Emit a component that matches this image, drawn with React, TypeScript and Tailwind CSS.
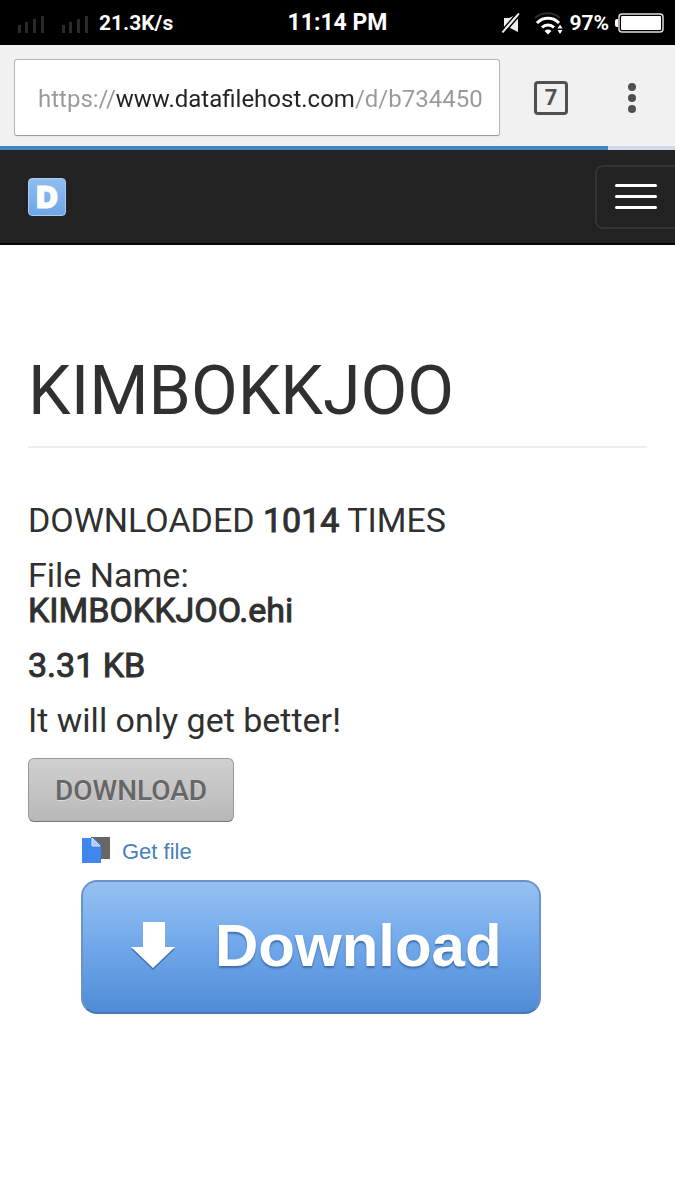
import { useState } from "react";

type FileInfo = {
  title: string;
  fileName: string;
  size: string;
  downloads: number;
  description: string;
};

const file: FileInfo = {
  title: "KIMBOKKJOO",
  fileName: "KIMBOKKJOO.ehi",
  size: "3.31 KB",
  downloads: 1014,
  description: "It will only get better!",
};

const SignalIcon = () => (
  <svg width="28" height="20" viewBox="0 0 28 20" fill="#2a2a2a" aria-hidden="true">
    <rect x="1" y="12" width="3" height="8" />
    <rect x="8" y="9" width="3" height="11" />
    <rect x="16" y="6" width="3" height="14" />
    <rect x="24" y="3" width="3" height="17" />
  </svg>
);

const MutedIcon = () => (
  <svg width="20" height="20" viewBox="0 0 20 20" aria-hidden="true">
    <path d="M3 5h5l9-4v18l-8-4H3z" fill="#eee" />
    <path d="M0 18.500 16.500-.5" stroke="#000" strokeWidth="1.500" />
    <path d="M1.500 19.500 18 .5" stroke="#eee" strokeWidth="2" />
    <path d="M3 20.500 19.500 1.500" stroke="#000" strokeWidth="1.500" />
  </svg>
);

const WifiIcon = () => (
  <svg width="32" height="24" viewBox="0 0 32 24" fill="none" aria-hidden="true">
    <path d="M2 7a19 19 0 0 1 25 0" stroke="#2c2c2c" strokeWidth="2" />
    <path d="M4 12a15 15 0 0 1 22 0" stroke="#fff" strokeWidth="3" />
    <path d="M9 16.500a8.500 8.500 0 0 1 12 0" stroke="#fff" strokeWidth="3" />
    <path d="M11.500 20a5 5 0 0 1 7 0L15 23.500z" fill="#fff" />
    <path d="M27 13.500l2.500 4h-5zM27 23l2.500-4h-5z" fill="#fff" />
  </svg>
);

const BatteryIcon = () => (
  <svg width="49" height="20" viewBox="0 0 49 20" aria-hidden="true">
    <path d="M3 6H2a2 2 0 0 0-2 2v4a2 2 0 0 0 2 2h1z" fill="#fff" />
    <rect x="4" y="1" width="44" height="18" rx="3" fill="none" stroke="#ddd" strokeWidth="1.500" />
    <rect x="6" y="3" width="40" height="14" rx="1" fill="#fff" />
  </svg>
);

const StatusBar = () => (
  <header className="grid grid-cols-[1fr_auto_1fr] items-center h-[45px] bg-black px-[11px] text-white font-bold text-[21px]">
    <div className="flex items-center gap-4 pl-1.5">
      <SignalIcon />
      <SignalIcon />
      <span className="-ml-1.5 mt-0.5">21.3K/s</span>
    </div>
    <span className="mt-0.5 text-[23px]">11:14 PM</span>
    <div className="flex items-center justify-end">
      <MutedIcon />
      <div className="ml-3 mr-1">
        <WifiIcon />
      </div>
      <span className="mt-0.5 mr-1.5">97%</span>
      <BatteryIcon />
    </div>
  </header>
);

const BrowserBar = () => {
  const [url, setUrl] = useState("https://www.datafilehost.com/d/b734450");

  return (
    <div className="bg-[#f1f1f1]">
      <div className="flex items-center h-[101px] pl-[14px] pr-[27px] pb-1 pt-2">
        <div className="flex-1 h-[77px] pl-[23px] pr-[14px] bg-white border border-[#b5b5b5] border-b-[#9c9c9c] rounded-[3px] shadow-xs">
          {/* scheme and path are greyed, the host stays dark */}
          <input
            type="text"
            aria-label="Address"
            value={url}
            onChange={(e) => setUrl(e.target.value)}
            className="block w-full h-full pt-0.5 text-2xl outline-none text-transparent bg-clip-text bg-[linear-gradient(90deg,#999_78px,#222_78px,#222_317px,#999_317px)]"
          />
        </div>
        <button
          type="button"
          aria-label="Open tabs"
          className="flex items-center justify-center w-[34px] h-[34px] ml-[34px] border-[3px] border-[#505050] rounded-[4px] text-[#505050] font-bold text-[22px]"
        >
          7
        </button>
        <button type="button" aria-label="Menu" className="flex justify-center w-8 ml-12">
          <svg width="8" height="30" viewBox="0 0 8 30" fill="#505050">
            <circle cx="4" cy="4" r="4" />
            <circle cx="4" cy="15" r="4" />
            <circle cx="4" cy="26" r="4" />
          </svg>
        </button>
      </div>
      <div className="h-1 bg-[#d3d9ea]">
        <div className="h-full bg-[#4285c0]" style={{ width: "90%" }} />
      </div>
    </div>
  );
};

const SiteNav = () => (
  <nav className="flex items-center justify-between h-[95px] pl-7 bg-[#222] border-b-2 border-[#080808]">
    <a
      href="#"
      aria-label="Home"
      className="flex items-center justify-center w-[38px] h-[38px] rounded-[4px] bg-linear-to-b from-[#8fbdf0] to-[#6fa6e8] border border-[#a9cdf5] text-white font-black text-[30px] leading-none [-webkit-text-stroke:1px] font-[Inter,sans-serif]"
    >
      D
    </a>
    <button
      type="button"
      aria-label="Toggle navigation"
      className="flex flex-col items-center justify-center gap-2 w-20 h-16 border-2 border-r-0 border-[#333] rounded-l-lg"
    >
      <span className="w-[42px] h-[3px] rounded-full bg-white" />
      <span className="w-[42px] h-[3px] rounded-full bg-white" />
      <span className="w-[42px] h-[3px] rounded-full bg-white" />
    </button>
  </nav>
);

const GetFileIcon = () => (
  <svg width="29" height="30" viewBox="0 0 29 30" aria-hidden="true">
    <path d="M10 0h19v22H10z" fill="#666" />
    <path d="M1 1h12l7 7v18H1z" fill="#3f86ee" />
    <path d="M11 1v8h8z" fill="#a9cbfa" stroke="#d8e8fd" strokeWidth="1" />
  </svg>
);

const App = () => {
  return (
    <div className="min-h-screen bg-white text-[#303030] font-[Roboto,sans-serif]">
      <StatusBar />
      <BrowserBar />
      <SiteNav />

      <main className="px-7 pt-[109px]">
        <h1 className="text-[68px] leading-[75px] pb-[17px] border-b-2 border-[#eee]">{file.title}</h1>

        <div className="flex flex-col gap-5 mt-[55px] text-[34px] leading-[35px]">
          <p>
            DOWNLOADED <span className="[-webkit-text-stroke:1px]">{file.downloads}</span> TIMES
          </p>
          <p>
            File Name:
            <br />
            <span className="[-webkit-text-stroke:1px]">{file.fileName}</span>
          </p>
          <p className="[-webkit-text-stroke:1px]">{file.size}</p>
          <p>{file.description}</p>
        </div>

        <button
          type="button"
          className="block w-[206px] h-16 mt-5 pt-0.5 rounded-md border border-[#999] border-b-[#777] bg-linear-to-b from-[#d0d0d0] to-[#b8b8b8] text-[#666] font-medium text-[28px] text-shadow-[0_1px_0_#ddd]"
        >
          DOWNLOAD
        </button>

        <div className="pl-[53px]">
          <a
            href="#"
            className="flex items-center gap-3 w-fit mt-[14px] text-[22px] leading-8 text-[#4a7fbd] font-['Liberation_Sans',sans-serif]"
          >
            <GetFileIcon />
            Get file
          </a>
          <button
            type="button"
            className="flex items-center gap-10 w-[460px] max-w-full h-[134px] mt-3 pl-12 pb-[3px] rounded-2xl border-2 border-[#6a94c8] border-b-[#4578b5] bg-linear-to-b from-[#95c1f2] via-[#70a7ea] to-[#4f8cd6] text-white font-bold text-[60px] leading-none text-shadow-[0_2px_2px_#3d6ca8] font-['Liberation_Sans',sans-serif]"
          >
            <svg width="44" height="48" viewBox="0 0 44 48" aria-hidden="true">
              <path d="M12 2h22v25h10L22 48 0 27h12z" fill="#3f72b0" />
              <path d="M12 0h22v25h10L22 46 0 25h12z" fill="#fff" />
            </svg>
            Download
          </button>
        </div>
      </main>
    </div>
  );
};

export default App;
